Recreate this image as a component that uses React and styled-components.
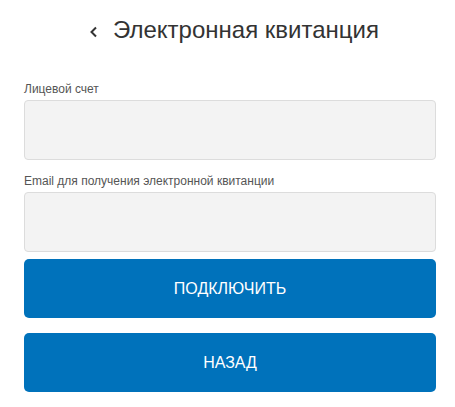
import React from "react";
import styled, { createGlobalStyle } from "styled-components";

const GlobalStyle = createGlobalStyle`
  body {
    margin: 0;
    background: #fff;
    font-family: "Liberation Sans", Arial, sans-serif;
  }
`;

const Page = styled.div`
  width: 412px;
  margin-left: 24px;
  display: flex;
  flex-direction: column;
`;

const Header = styled.div`
  height: 62px;
  display: flex;
  align-items: center;
  justify-content: center;
  gap: 14px;
  padding-left: 8px;
  padding-bottom: 2px;
  box-sizing: border-box;
`;

const BackIcon = styled.svg`
  width: 10px;
  height: 12px;
  margin-top: 3px;
`;

const Title = styled.h1`
  margin: 0;
  font-size: 24px;
  font-weight: normal;
  color: #333;
`;

const Form = styled.form`
  display: flex;
  flex-direction: column;
  margin-top: 20px;
`;

const Label = styled.label`
  display: block;
  font-size: 12px;
  color: #555;
  line-height: 14px;
  margin-bottom: 4px;
`;

const Field = styled.div`
  display: flex;
  flex-direction: column;
  margin-bottom: ${(p) => p.$gap || 14}px;
`;

const Input = styled.input`
  box-sizing: border-box;
  width: 100%;
  height: 60px;
  border: 1px solid #dcdcdc;
  border-radius: 4px;
  background: #f3f3f3;
  outline: none;
`;

const Button = styled.button`
  height: 59px;
  border: none;
  border-radius: 5px;
  background: #0072bb;
  color: #fff;
  font-family: "Liberation Sans", Arial, sans-serif;
  font-size: 16px;
  cursor: pointer;
  margin-bottom: 15px;
`;

export default function App() {
  return (
    <>
      <GlobalStyle />
      <Page>
        <Header>
          <BackIcon viewBox="0 0 10 12">
            <path d="M7 1.5 L2.5 6 L7 10.5" fill="none" stroke="#333" strokeWidth="2" />
          </BackIcon>
          <Title>Электронная квитанция</Title>
        </Header>
        <Form onSubmit={(e) => e.preventDefault()}>
          <Field>
            <Label>Лицевой счет</Label>
            <Input />
          </Field>
          <Field $gap={7}>
            <Label>Email для получения электронной квитанции</Label>
            <Input />
          </Field>
          <Button type="submit">ПОДКЛЮЧИТЬ</Button>
          <Button type="button">НАЗАД</Button>
        </Form>
      </Page>
    </>
  );
}
